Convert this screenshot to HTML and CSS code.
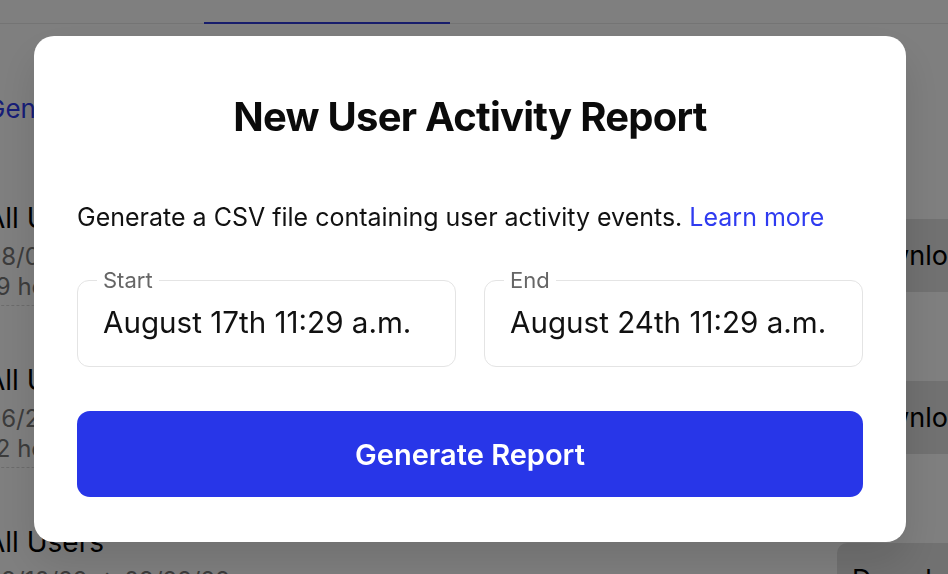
FILE: index.html
```html
<!DOCTYPE html>
<html lang="en">
<head>
<meta charset="utf-8">
<title>Reports</title>
<link rel="stylesheet" href="styles.css">
</head>
<body>
<div class="page">
  <nav class="tabs">
    <a class="tab active" href="#"></a>
  </nav>
  <main class="content">
    <a class="gen-link" href="#">Generate New Report</a>
    <ul class="reports">
      <li class="report">
        <div class="info">
          <div class="r-title">All Users</div>
          <div class="range">08/03/22 → 08/17/22</div>
          <div class="ago"><span>19 hours ago</span></div>
        </div>
        <button class="download">Download</button>
      </li>
      <li class="report">
        <div class="info">
          <div class="r-title">All Users</div>
          <div class="range">06/27/22 → 07/11/22</div>
          <div class="ago"><span>12 hours ago</span></div>
        </div>
        <button class="download">Download</button>
      </li>
      <li class="report">
        <div class="info">
          <div class="r-title">All Users</div>
          <div class="range">09/10/22 → 09/22/22</div>
          <div class="ago"><span>1 day ago</span></div>
        </div>
        <button class="download">Download</button>
      </li>
    </ul>
  </main>
</div>

<div class="overlay">
  <div class="modal" role="dialog" aria-labelledby="modal-title">
    <h2 id="modal-title" class="modal-title">New User Activity Report</h2>
    <p class="desc">Generate a CSV file containing user activity events. <a href="#" class="link">Learn more</a></p>
    <div class="fields">
      <fieldset class="field">
        <legend>Start</legend>
        <div class="value">August 17th 11:29 a.m.</div>
      </fieldset>
      <fieldset class="field">
        <legend>End</legend>
        <div class="value">August 24th 11:29 a.m.</div>
      </fieldset>
    </div>
    <button class="cta">Generate Report</button>
  </div>
</div>
</body>
</html>
```
FILE: styles.css
```css
body {
  margin: 0;
  font-family: Inter, "Noto Sans", sans-serif;
  color: #111;
  background: #fff;
  overflow: hidden;
}

.page {
  margin-left: -14px;
  width: 1010px;
}

.tabs {
  display: flex;
  align-items: flex-start;
  height: 23px;
  border-bottom: 1px solid #e9e9e9;
}

.tab {
  display: block;
}

.tab.active {
  margin-left: 218px;
  width: 246px;
  height: 24px;
  box-sizing: border-box;
  border-bottom: 2px solid #2e3ad8;
  margin-bottom: -1px;
}

.content {
  padding-top: 69px;
}

.gen-link {
  display: block;
  font-size: 26px;
  line-height: 32px;
  color: #2f3bf0;
  text-decoration: none;
}

.reports {
  list-style: none;
  margin: 48px 0 0;
  padding: 0;
}

.report {
  display: grid;
  grid-template-columns: 851px auto;
  align-items: center;
  padding: 28px 0 29px;
}

.r-title {
  font-size: 28px;
  line-height: 34px;
  margin-bottom: 7px;
  color: #000;
}

.range {
  font-size: 24px;
  line-height: 30px;
  color: #787878;
}

.ago {
  font-size: 24px;
  line-height: 30px;
  color: #787878;
}

.ago span {
  display: inline-block;
  padding-bottom: 3px;
  border-bottom: 1px dashed #d8d8d8;
}

.download {
  font-family: inherit;
  font-size: 27px;
  line-height: 33px;
  padding: 20px 15px;
  margin-top: 4px;
  background: #e2e2e2;
  border: 0;
  border-radius: 10px;
  color: #000;
  white-space: nowrap;
  justify-self: start;
}

.overlay {
  position: fixed;
  inset: 0;
  background: rgba(0, 0, 0, 0.5);
  display: flex;
  justify-content: center;
  align-items: center;
  padding: 4px 8px 0 0;
}

.modal {
  width: 872px;
  box-sizing: border-box;
  padding: 57px 43px 45px;
  background: #fff;
  border-radius: 20px;
  box-shadow: 0 20px 40px rgba(0, 0, 0, 0.12);
}

.modal-title {
  margin: 0;
  text-align: center;
  font-size: 40px;
  line-height: 48px;
  font-weight: 700;
  letter-spacing: -0.75px;
  color: #0b0b0b;
}

.desc {
  margin: 61px 0 0;
  font-size: 25px;
  line-height: 30px;
  color: #111;
}

.link {
  color: #2f3bf0;
  text-decoration: none;
}

.fields {
  display: grid;
  grid-template-columns: 1fr 1fr;
  gap: 28px;
  margin-top: 36px;
}

.field {
  margin: 0;
  min-width: 0;
  padding: 11px 19px 26px;
  border: 1px solid #e4e4e4;
  border-radius: 12px;
}

.field legend {
  padding: 0 6px;
  font-size: 22px;
  line-height: 25px;
  color: #666;
}

.value {
  padding-left: 6px;
  font-size: 29.6px;
  line-height: 36px;
  color: #111;
  white-space: nowrap;
}

.cta {
  display: block;
  margin-top: 44px;
  width: 100%;
  height: 86px;
  border: 0;
  border-radius: 13px;
  background: #2836e8;
  color: #fff;
  font-family: inherit;
  font-size: 29px;
  line-height: 35px;
  font-weight: 600;
}
```
